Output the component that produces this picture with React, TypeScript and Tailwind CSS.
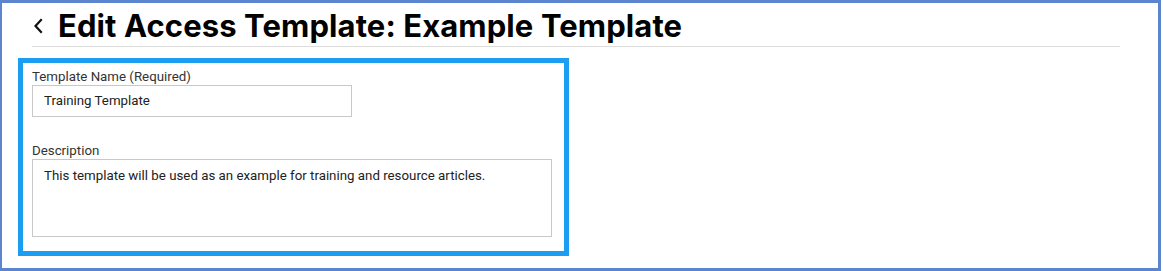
import React from "react";

export default function App() {
  return (
    <div
      className="w-[1161px] h-[271px] bg-white border-t-[3px] border-l-2 border-r-[3px] border-b-[3px] border-[#5b86cf] box-border"
      style={{ fontFamily: '"Roboto", "Inter", sans-serif' }}
    >
      <div className="ml-[30px] w-[1088px]">
        <div className="flex items-center h-[44px] pt-[2px] border-b border-[#dcdcdc]">
          <svg width="10" height="16" viewBox="0 0 10 16" className="ml-[1px] mr-[15px] mt-[1px]">
            <path d="M8 2 L2.5 8 L8 14" stroke="#111" strokeWidth="2.2" fill="none" strokeLinecap="square" />
          </svg>
          <h1
            className="text-[31px] leading-[36px] font-bold text-black tracking-[0.1px]"
            style={{ fontFamily: '"Inter", "Roboto", sans-serif' }}
          >
            Edit Access Template: Example Template
          </h1>
        </div>
      </div>
      <div className="mt-[11px] ml-[16px] w-[551px] h-[198px] border-[5px] border-[#1b9ef2] pt-[5px] pl-[9px] pr-[12px] box-border">
        <label className="block text-[13.3px] leading-[17px] text-[#333]">Template Name (Required)</label>
        <div className="w-[320px] h-[32px] border border-[#c8c8c8] flex items-center px-[11px] text-[13.3px] text-[#222]">
          Training Template
        </div>
        <label className="block mt-[25px] text-[13.3px] leading-[17px] text-[#333]">Description</label>
        <div className="w-[520px] h-[78px] border border-[#c8c8c8] px-[11px] pt-[7px] text-[13.3px] leading-[17px] text-[#222]">
          This template will be used as an example for training and resource articles.
        </div>
      </div>
    </div>
  );
}
